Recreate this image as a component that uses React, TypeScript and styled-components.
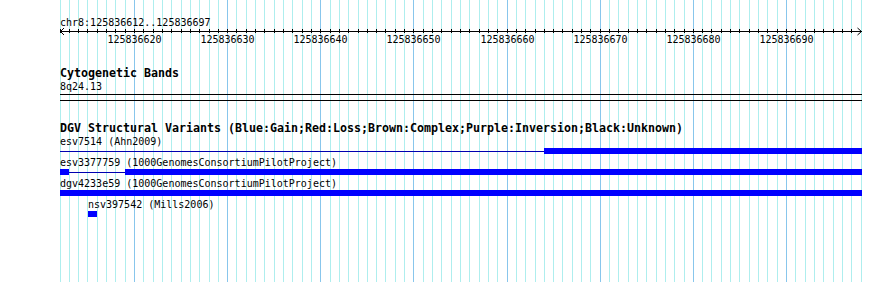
import React from 'react';
import styled, { createGlobalStyle } from 'styled-components';

const VIEW_START = 125836612;
const VIEW_END = 125836697;
const LEFT = 60;
const SPAN_PX = 801;
const BP = VIEW_END - VIEW_START + 1;
const SCALE = SPAN_PX / BP;
const LANE_W = SPAN_PX + 1;
const WIDTH = 890;
const HEIGHT = 282;

const toX = (bp: number) => (bp - VIEW_START) * SCALE;

type Part = { from: number; to: number; kind: 'block' | 'line' };
type Feature = { name: string; source: string; parts: Part[] };

const features: Feature[] = [
  {
    name: 'esv7514',
    source: 'Ahn2009',
    parts: [
      { from: VIEW_START, to: 125836664, kind: 'line' },
      { from: 125836664, to: VIEW_END + 1, kind: 'block' },
    ],
  },
  {
    name: 'esv3377759',
    source: '1000GenomesConsortiumPilotProject',
    parts: [
      { from: VIEW_START, to: 125836613, kind: 'block' },
      { from: 125836613, to: 125836619, kind: 'line' },
      { from: 125836619, to: VIEW_END + 1, kind: 'block' },
    ],
  },
  {
    name: 'dgv4233e59',
    source: '1000GenomesConsortiumPilotProject',
    parts: [{ from: VIEW_START, to: VIEW_END + 1, kind: 'block' }],
  },
  {
    name: 'nsv397542',
    source: 'Mills2006',
    parts: [{ from: 125836615, to: 125836616, kind: 'block' }],
  },
];

const GlobalStyle = createGlobalStyle`
  html, body {
    margin: 0;
    padding: 0;
    background: #ffffff;
  }
`;

const Panel = styled.div`
  position: relative;
  width: ${WIDTH}px;
  height: ${HEIGHT}px;
  overflow: hidden;
  background: #ffffff;
  color: #000;
  font-family: "DejaVu Sans Mono", "Liberation Mono", monospace;
`;

const GridLayer = styled.svg`
  position: absolute;
  left: 0;
  top: 0;
  z-index: 0;
`;

const Content = styled.div`
  position: relative;
  z-index: 1;
  width: ${LANE_W}px;
  padding: 16px 0 0 ${LEFT}px;
`;

const RulerLabel = styled.div`
  font-size: 10px;
  line-height: 13px;
  height: 13px;
  white-space: nowrap;
`;

const RulerAxis = styled.svg`
  display: block;
  margin-left: -${LEFT}px;
  overflow: visible;
`;

const Track = styled.section<{ $gap: number }>`
  margin-top: ${(p) => p.$gap}px;
`;

const TrackTitle = styled.div`
  font-size: 11.63px;
  font-weight: bold;
  line-height: 13px;
  height: 13px;
  white-space: nowrap;
`;

const Label = styled.div<{ $indent?: number }>`
  font-size: 10px;
  line-height: 13px;
  height: 13px;
  white-space: nowrap;
  padding-left: ${(p) => p.$indent ?? 0}px;
`;

const BandBox = styled.div`
  box-sizing: border-box;
  margin-top: 1px;
  width: ${LANE_W}px;
  height: 7px;
  border-top: 1px solid #000;
  border-bottom: 1px solid #000;
`;

const Row = styled.div`
  margin-bottom: 2px;
`;

const Lane = styled.div`
  display: flex;
  align-items: center;
  width: ${LANE_W}px;
  height: 6px;
`;

const Segment = styled.div<{ $kind: 'block' | 'line' | 'gap' }>`
  flex: none;
  height: ${(p) => (p.$kind === 'block' ? 6 : 1)}px;
  background: ${(p) =>
    p.$kind === 'block' ? '#0000ff' : p.$kind === 'line' ? '#0000b0' : 'transparent'};
`;

const Grid = () => {
  const lines = [];
  for (let i = 0; i <= BP; i++) {
    const x = Math.floor(LEFT + i * SCALE) + 0.5;
    const major = (VIEW_START + i) % 10 === 0;
    lines.push(
      <line
        key={i}
        x1={x}
        x2={x}
        y1={0}
        y2={HEIGHT}
        stroke={major ? '#88c6ec' : '#aeeeee'}
        strokeWidth={1}
      />
    );
  }
  return (
    <GridLayer width={WIDTH} height={HEIGHT} shapeRendering="crispEdges">
      {lines}
    </GridLayer>
  );
};

const Ruler = () => {
  const ticks = [];
  const labels = [];
  for (let i = 0; i <= BP - 1; i++) {
    const x = Math.floor(LEFT + i * SCALE) + 0.5;
    ticks.push(<line key={i} x1={x} x2={x} y1={0} y2={4} stroke="#000" />);
    const pos = VIEW_START + i;
    if (pos % 10 === 0) {
      labels.push(
        <text key={pos} x={x} y={14} textAnchor="middle" fontSize={10} fill="#000">
          {pos}
        </text>
      );
    }
  }
  const end = LEFT + SPAN_PX + 0.5;
  return (
    <RulerAxis width={WIDTH} height={18}>
      <g shapeRendering="crispEdges">
        <line x1={LEFT} x2={end} y1={2.5} y2={2.5} stroke="#000" />
        {ticks}
      </g>
      <polyline points={`${LEFT + 4},-1 ${LEFT + 0.5},2.5 ${LEFT + 4},6`} fill="none" stroke="#000" />
      <polyline points={`${end - 4},-1 ${end},2.5 ${end - 4},6`} fill="none" stroke="#000" />
      {labels}
    </RulerAxis>
  );
};

const FeatureRow = ({ feature }: { feature: Feature }) => {
  const first = feature.parts[0];
  const indent = Math.round(toX(first.from));
  let cursor = 0;
  const segs: React.ReactNode[] = [];
  feature.parts.forEach((part, idx) => {
    const x0 = Math.round(toX(part.from));
    const x1 = Math.min(LANE_W, Math.round(toX(part.to)) + (part.to > VIEW_END ? 1 : 0));
    if (x0 > cursor) {
      segs.push(<Segment key={`g${idx}`} $kind="gap" style={{ width: x0 - cursor }} />);
    }
    segs.push(<Segment key={idx} $kind={part.kind} style={{ width: x1 - x0 }} />);
    cursor = x1;
  });
  return (
    <Row>
      <Label $indent={indent}>
        {feature.name} ({feature.source})
      </Label>
      <Lane>{segs}</Lane>
    </Row>
  );
};

export default function App() {
  return (
    <>
      <GlobalStyle />
      <Panel>
        <Grid />
        <Content>
          <RulerLabel>
            chr8:{VIEW_START}..{VIEW_END}
          </RulerLabel>
          <Ruler />

          <Track $gap={20}>
            <TrackTitle>Cytogenetic Bands</TrackTitle>
            <Label>8q24.13</Label>
            <BandBox />
          </Track>

          <Track $gap={21}>
            <TrackTitle>
              DGV Structural Variants (Blue:Gain;Red:Loss;Brown:Complex;Purple:Inversion;Black:Unknown)
            </TrackTitle>
            {features.map((f) => (
              <FeatureRow key={f.name} feature={f} />
            ))}
          </Track>
        </Content>
      </Panel>
    </>
  );
}
